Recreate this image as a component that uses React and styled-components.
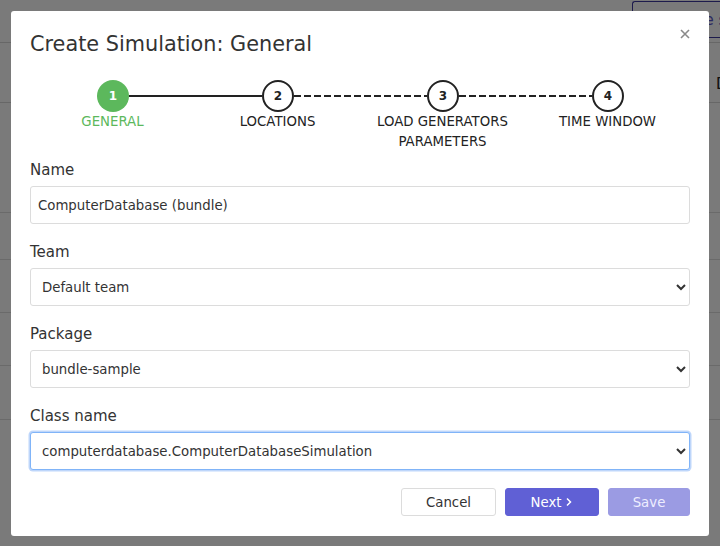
import React from "react";
import styled, { createGlobalStyle, css } from "styled-components";

const Global = createGlobalStyle`
  html, body { margin: 0; padding: 0; width: 720px; height: 546px; overflow: hidden; }
  body { font-family: "DejaVu Sans", Verdana, sans-serif; background: #fff; color: #333; }
  * { box-sizing: border-box; }
`;

/* ---------- background page (dimmed) ---------- */
const Page = styled.div`
  width: 720px;
  height: 546px;
  display: flex;
  flex-direction: column;
`;
const PageHeader = styled.div`
  height: 43px;
  display: flex;
  justify-content: flex-end;
  align-items: flex-start;
  padding-top: 1px;
  border-bottom: 1px solid #d8d8d8;
`;
const GhostButton = styled.div`
  width: 88px;
  height: 37px;
  border: 1px solid #3d3aa0;
  border-right: none;
  border-radius: 3px 0 0 3px;
  color: #5a57c8;
  font-size: 15px;
  padding: 9px 0 0 31px;
  white-space: nowrap;
  overflow: hidden;
`;
const Toolbar = styled.div`
  height: 60px;
  display: flex;
  justify-content: flex-end;
  align-items: flex-start;
  padding-top: 32px;
  border-bottom: 1px solid #d8d8d8;
  font-size: 15px;
  color: #222;
`;
const ToolbarText = styled.span`
  width: 4px;
  overflow: hidden;
`;
const PageRow = styled.div`
  height: ${(p) => p.$h}px;
  border-bottom: 1px solid #dedede;
`;

const Overlay = styled.div`
  position: fixed;
  inset: 0;
  background: rgba(0, 0, 0, 0.52);
  padding: 11px;
`;

/* ---------- modal ---------- */
const Modal = styled.div`
  width: 698px;
  background: #fff;
  border-radius: 3px;
  padding: 20px 19px 20px;
  position: relative;
  display: flex;
  flex-direction: column;
`;
const Title = styled.h2`
  margin: 0;
  font-size: 20.8px;
  line-height: 26px;
  font-weight: 400;
  color: #333;
`;
const Close = styled.button`
  position: absolute;
  top: 15px;
  right: 16px;
  border: none;
  background: none;
  padding: 0;
  width: 16px;
  height: 16px;
  color: #8a8a8a;
  display: flex;
  align-items: center;
  justify-content: center;
  cursor: pointer;
`;

const Stepper = styled.div`
  margin-top: 23px;
  display: flex;
  flex-direction: column;
`;
const Track = styled.div`
  display: flex;
  align-items: center;
  padding: 0 66px 0 67px;
`;
const Circle = styled.div`
  width: 32px;
  height: 32px;
  flex: none;
  border-radius: 50%;
  display: flex;
  align-items: center;
  justify-content: center;
  font-size: 12px;
  font-weight: 700;
  ${(p) =>
    p.$active
      ? css`
          background: #5cb85c;
          color: #fff;
        `
      : css`
          background: #fff;
          border: 2px solid #222;
          color: #222;
        `}
`;
const Connector = styled.div`
  flex: 1;
  height: 2px;
  background: ${(p) =>
    p.$dashed
      ? "repeating-linear-gradient(to right, #222 0 7px, transparent 7px 10px)"
      : "#222"};
`;
const StepLabels = styled.div`
  display: grid;
  grid-template-columns: repeat(4, 1fr);
`;
const StepLabel = styled.div`
  text-align: center;
  font-size: 13.3px;
  line-height: 20px;
  text-transform: uppercase;
  color: ${(p) => (p.$active ? "#5cb85c" : "#222")};
`;

const Form = styled.div`
  margin-top: 7px;
  display: flex;
  flex-direction: column;
  gap: 17px;
`;
const Field = styled.div`
  display: flex;
  flex-direction: column;
`;
const Label = styled.label`
  font-size: 15px;
  line-height: 23px;
  color: #333;
  margin-bottom: 4px;
`;
const fieldBase = css`
  width: 100%;
  height: 38px;
  border: 1px solid #dcdcdc;
  border-radius: 3px;
  background: #fff;
  font-family: "DejaVu Sans", Verdana, sans-serif;
  font-size: 13.3px;
  color: #333;
  outline: none;
  ${(p) =>
    p.$focused &&
    css`
      border-color: #80b4f8;
      box-shadow: 0 0 0 1.5px rgba(110, 165, 245, 0.45);
    `}
`;
const Input = styled.input`
  ${fieldBase};
  padding: 0 7px;
`;
const Select = styled.select`
  ${fieldBase};
  padding: 0 6px 0 7px;
`;

const Footer = styled.div`
  margin-top: 18px;
  display: flex;
  justify-content: flex-end;
  gap: 9px;
`;
const Button = styled.button`
  height: 28px;
  width: ${(p) => p.$w}px;
  border-radius: 3px;
  font-family: "DejaVu Sans", Verdana, sans-serif;
  font-size: 13.3px;
  display: flex;
  align-items: center;
  justify-content: center;
  gap: 4px;
  padding: 0;
  cursor: pointer;
  ${(p) =>
    p.$variant === "primary"
      ? css`
          background: #6060d5;
          border: 1px solid #6060d5;
          color: #fff;
        `
      : p.$variant === "disabled"
      ? css`
          background: #9b9be3;
          border: 1px solid #9b9be3;
          color: #eef;
        `
      : css`
          background: #fff;
          border: 1px solid #dcdcdc;
          color: #333;
        `}
`;

const steps = [
  { n: 1, label: "General" },
  { n: 2, label: "Locations" },
  { n: 3, label: "Load generators parameters" },
  { n: 4, label: "Time window" },
];

export default function App() {
  return (
    <>
      <Global />
      <Page>
        <PageHeader>
          <GhostButton>Create simulation</GhostButton>
        </PageHeader>
        <Toolbar>
          <ToolbarText>D</ToolbarText>
        </Toolbar>
        <PageRow $h={110} />
        <PageRow $h={47} />
        <PageRow $h={53} />
        <PageRow $h={53} />
        <PageRow $h={54} />
      </Page>
      <Overlay>
        <Modal>
          <Title>Create Simulation: General</Title>
          <Close aria-label="Close">
            <svg width="10" height="10" viewBox="0 0 10 10">
              <path d="M1 1L9 9M9 1L1 9" stroke="currentColor" strokeWidth="1.6" />
            </svg>
          </Close>
          <Stepper>
            <Track>
              <Circle $active>1</Circle>
              <Connector />
              <Circle>2</Circle>
              <Connector $dashed />
              <Circle>3</Circle>
              <Connector $dashed />
              <Circle>4</Circle>
            </Track>
            <StepLabels>
              {steps.map((s) => (
                <StepLabel key={s.n} $active={s.n === 1}>
                  {s.label}
                </StepLabel>
              ))}
            </StepLabels>
          </Stepper>
          <Form>
            <Field>
              <Label>Name</Label>
              <Input defaultValue="ComputerDatabase (bundle)" />
            </Field>
            <Field>
              <Label>Team</Label>
              <Select defaultValue="Default team">
                <option>Default team</option>
              </Select>
            </Field>
            <Field>
              <Label>Package</Label>
              <Select defaultValue="bundle-sample">
                <option>bundle-sample</option>
              </Select>
            </Field>
            <Field>
              <Label>Class name</Label>
              <Select $focused defaultValue="computerdatabase.ComputerDatabaseSimulation">
                <option>computerdatabase.ComputerDatabaseSimulation</option>
              </Select>
            </Field>
          </Form>
          <Footer>
            <Button $w={95}>Cancel</Button>
            <Button $w={94} $variant="primary">
              Next
              <svg width="8" height="10" viewBox="0 0 8 10">
                <path d="M2 1.5L5.5 5L2 8.5" stroke="currentColor" strokeWidth="1.5" fill="none" />
              </svg>
            </Button>
            <Button $w={82} $variant="disabled">Save</Button>
          </Footer>
        </Modal>
      </Overlay>
    </>
  );
}
